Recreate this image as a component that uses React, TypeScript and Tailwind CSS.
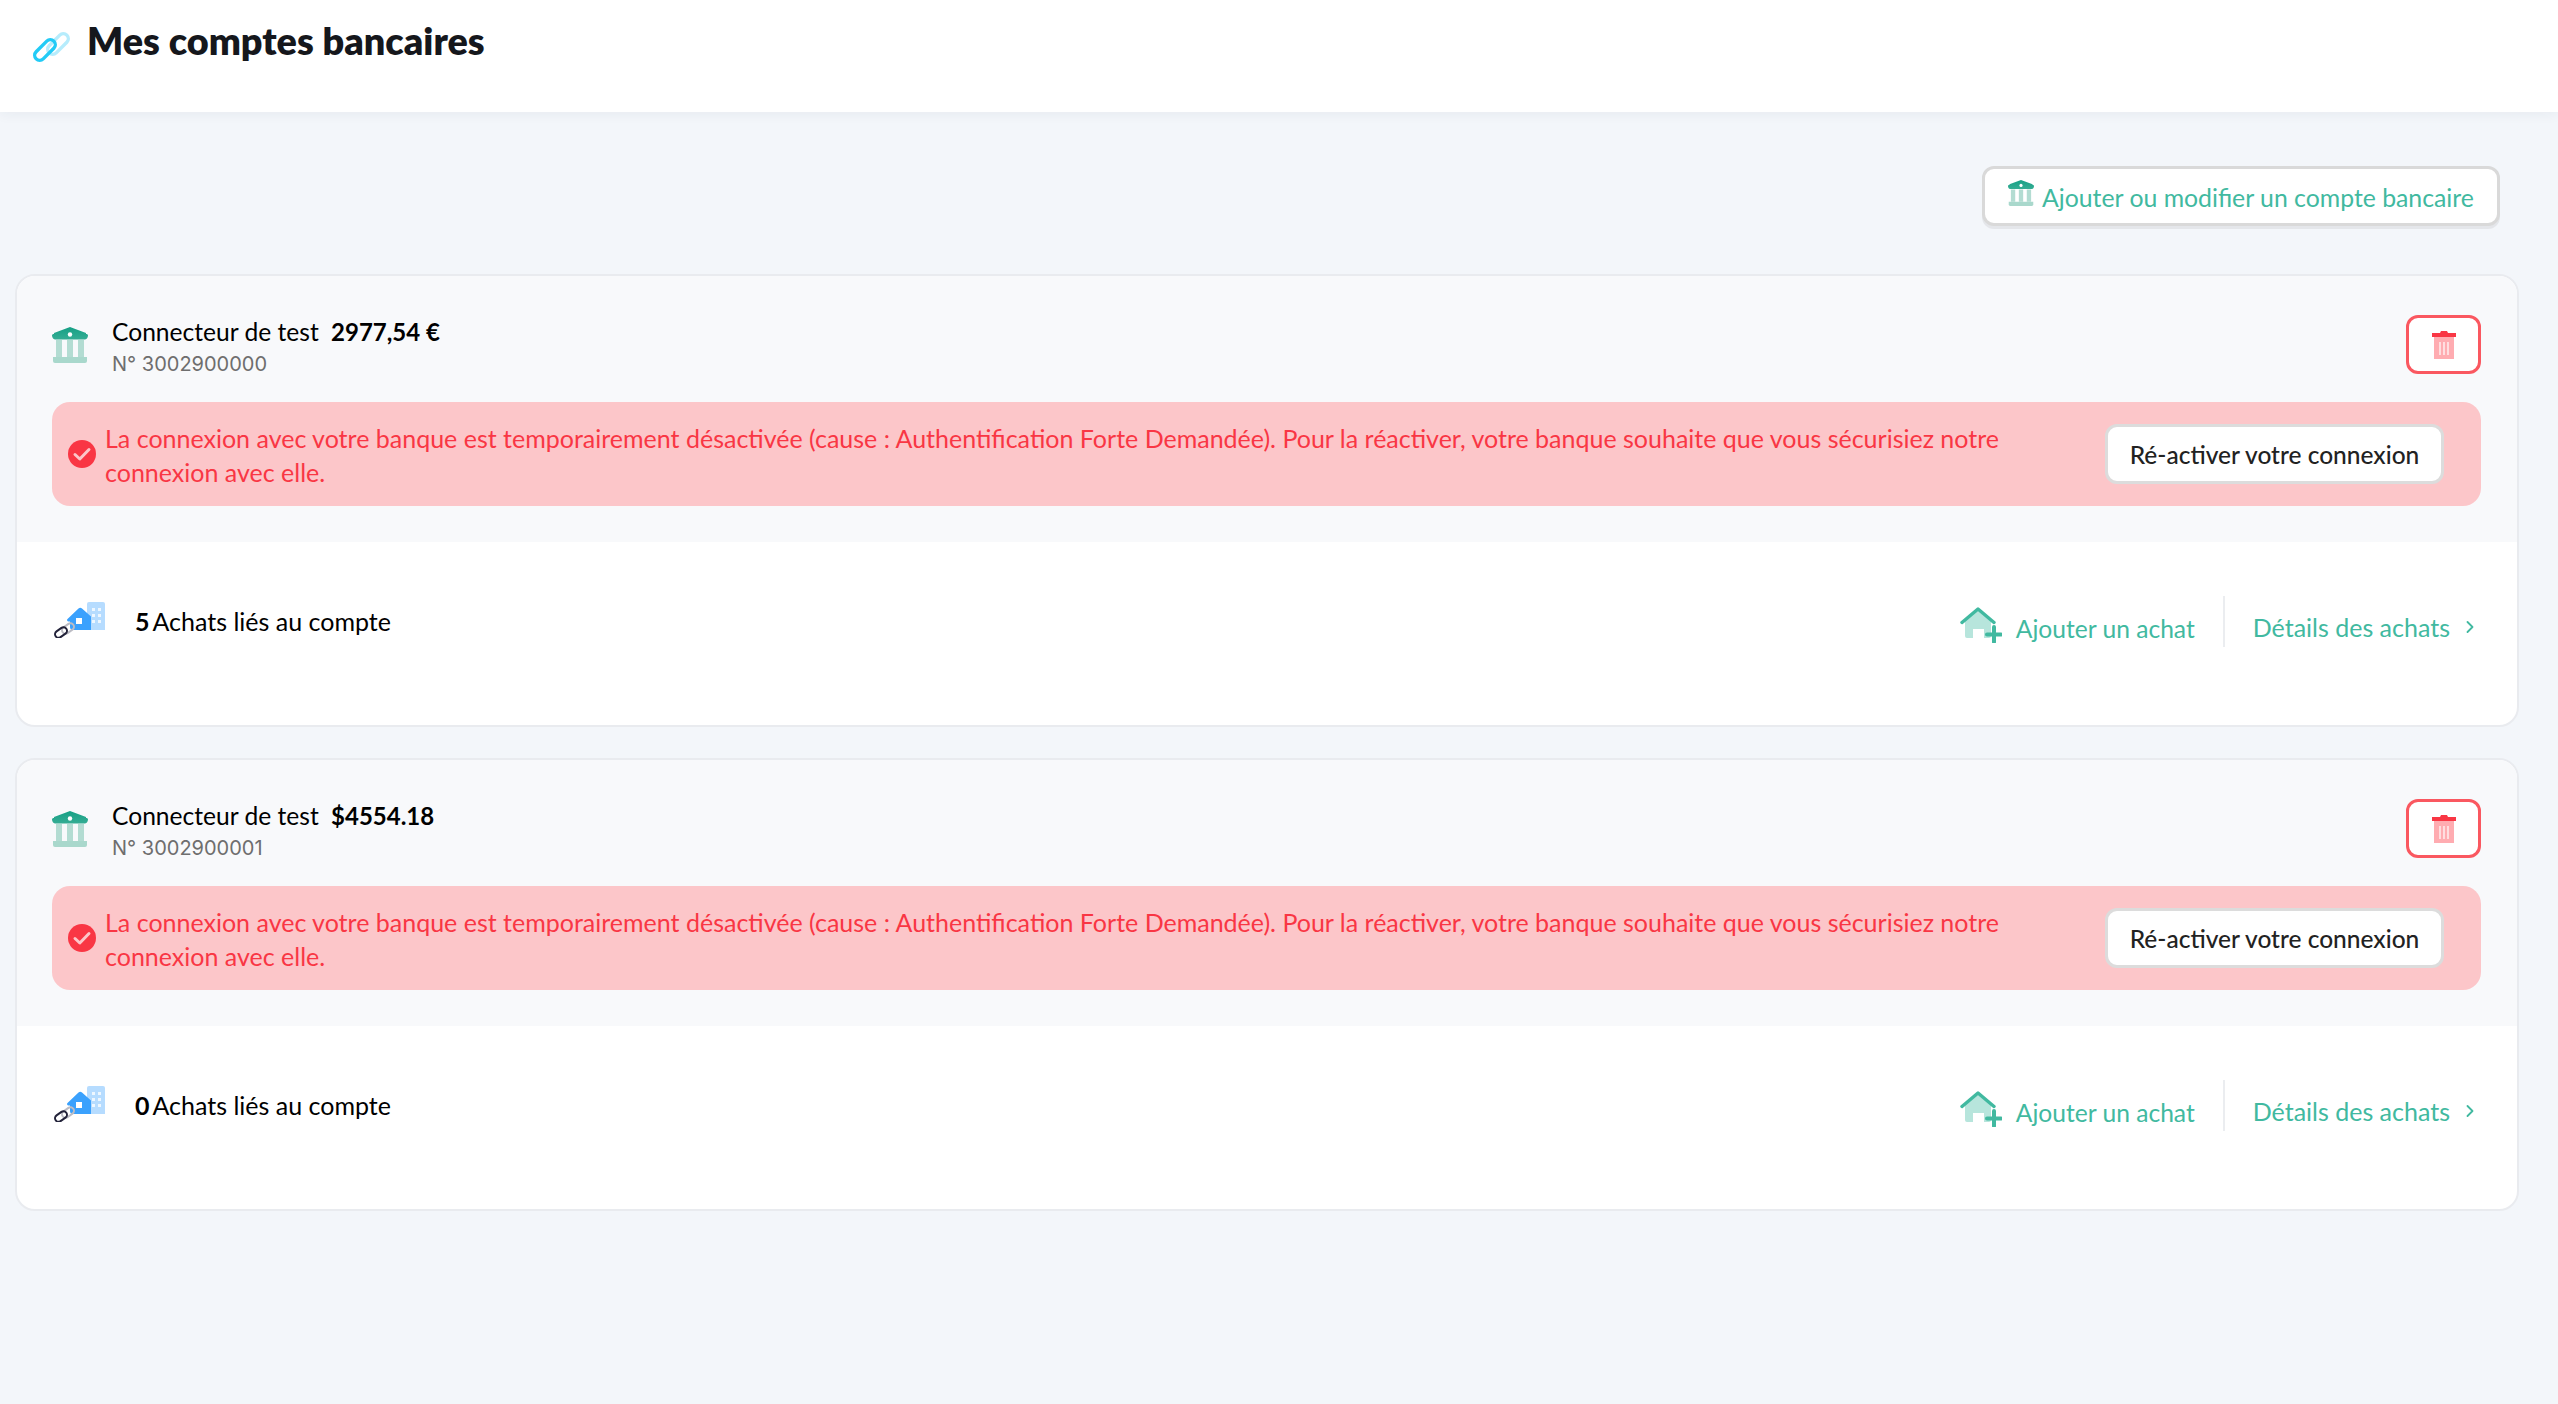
import { ChevronRight } from "lucide-react"

function LinkIcon() {
  return (
    <svg width="39" height="32" viewBox="0 0 39 32" fill="none" className="mt-[10px]">
      <rect x="13.500" y="8" width="25" height="10" rx="5" transform="rotate(-45 26 13)" stroke="#b6ecfc" strokeWidth="3.400" />
      <rect x="0.500" y="14" width="25" height="10" rx="5" transform="rotate(-45 13 19)" stroke="#22cbf6" strokeWidth="3.400" />
    </svg>
  )
}

function BankIcon({ id, size = 36 }: { id: string; size?: number }) {
  return (
    <svg width={size} height={size} viewBox="0 0 36 36" fill="none">
      <defs>
        <linearGradient id={id} x1="0" y1="0" x2="0" y2="1">
          <stop offset="0" stopColor="#16a085" />
          <stop offset="1" stopColor="#35ad94" />
        </linearGradient>
      </defs>
      <path d="M4 13h6v17H4zM15 13h6v17h-6zM26 13h6v17h-6z" fill="#b3dcd2" />
      <path d="M1 30h34v4a2 2 0 0 1-2 2H3a2 2 0 0 1-2-2z" fill="#a9d8cc" />
      <path d="M18 0 34 6v1c1.500 0 2 .7 2 1.500 0 1-1 4-3 4H3c-2 0-3-3-3-4C0 7.700.5 7 2 7V6z" fill={`url(#${id})`} />
      <circle cx="18" cy="7.500" r="2.200" fill="#fff" />
    </svg>
  )
}

function TrashIcon() {
  return (
    <svg width="24" height="28" viewBox="0 0 24 28" fill="none">
      <rect x="2" y="5" width="20" height="23" fill="#ffacb1" />
      <path d="M8 11v13M12 11v13M16 11v13" stroke="#fff" strokeWidth="1.200" />
      <path d="M0 2h8l1-2h6l1 2h8v4H0z" fill="#f93644" />
    </svg>
  )
}

function CheckCircle() {
  return (
    <svg width="28" height="28" viewBox="0 0 28 28" fill="none" className="shrink-0">
      <circle cx="14" cy="14" r="14" fill="#f93644" />
      <path d="M7 14.500 11.800 19 21 9.500" stroke="#fcc6c9" strokeWidth="3" strokeLinecap="round" strokeLinejoin="round" />
    </svg>
  )
}

function PurchasesIcon() {
  return (
    <svg width="52" height="36" viewBox="0 0 52 36" fill="none">
      <path d="M34 2a2 2 0 0 1 2-2h14a2 2 0 0 1 2 2v26H34z" fill="#b6dcff" />
      <path d="M39 6h3v3h-3zM45 6h3v3h-3zM39 12h3v3h-3zM45 12h3v3h-3zM39 18h3v3h-3zM45 18h3v3h-3z" fill="#eef7ff" />
      <path d="M25.500 6.500a2.500 2.500 0 0 1 3.500 0L38 14.500V28H20a3 3 0 0 1-3-3V19.500h-1.500a1.500 1.500 0 0 1-1-2.600z" fill="#3aa1fd" />
      <rect x="23" y="16" width="6" height="6" fill="#fff" />
      <rect x="8.500" y="23" width="13" height="7" rx="3.500" transform="rotate(-35 15 26.500)" stroke="#bcbcc4" strokeWidth="2" />
      <rect x="1.500" y="27" width="13" height="7" rx="3.500" transform="rotate(-35 8 30.500)" stroke="#23233a" strokeWidth="2" />
    </svg>
  )
}

function AddHouseIcon() {
  return (
    <svg width="42" height="37" viewBox="0 0 42 37" fill="none">
      <path d="M5 15 18 4l13 11v15a2 2 0 0 1-2 2h-5V23h-11v9H7a2 2 0 0 1-2-2z" fill="#b7e5dc" />
      <path d="M2 16.500 18 3l16 13.500" stroke="#41b9a0" strokeWidth="3.400" strokeLinecap="round" strokeLinejoin="round" />
      <path d="M34 21v15M27 28.500h14" stroke="#41b9a0" strokeWidth="4" strokeLinecap="round" />
    </svg>
  )
}

function AccountCard({ id, number, balance, count }: { id: string; number: string; balance: string; count: number }) {
  return (
    <section className="overflow-hidden rounded-[20px] border-2 border-[#e9ebef] bg-white">
      <div className="bg-[#f8f9fb] pl-[35px] pr-[36px] pt-[39px] pb-[36px]">
        <div className="flex h-[59px] items-center justify-between">
          <div className="flex items-center">
            <BankIcon id={id} />
            <div className="ml-[24px] mt-[4px]">
              <div className="text-[24.6px] leading-[34px] text-black">
                Connecteur de test <span className="ml-[6px] text-[24px] font-bold">{balance}</span>
              </div>
              <div className="font-['Inter',sans-serif] text-[20px] leading-[30px] text-[#6e6e6e]">N° {number}</div>
            </div>
          </div>
          <button className="flex h-[59px] w-[75px] items-center justify-center rounded-[12px] border-[3px] border-[#fa5860] bg-white">
            <TrashIcon />
          </button>
        </div>
        <div className="mt-[28px] flex h-[104px] items-center justify-between rounded-[18px] bg-[#fcc6c9] pl-[16px] pr-[37px]">
          <div className="flex items-center gap-[9px]">
            <CheckCircle />
            <p className="mt-[2px] w-[1930px] text-[25px] leading-[34px] text-[#f93644]">
              La connexion avec votre banque est temporairement désactivée (cause : Authentification Forte Demandée). Pour la réactiver, votre banque souhaite que vous sécurisiez notre connexion avec elle.
            </p>
          </div>
          <button className="flex h-[60px] w-[339px] shrink-0 items-center justify-center rounded-[12px] border-[3px] border-[#dcdcdc] bg-white pt-[2px] text-[24.5px] font-medium text-[#222]">
            Ré-activer votre connexion
          </button>
        </div>
      </div>
      <div className="flex h-[183px] items-start justify-between pl-[36px] pr-[37px] pt-[54px]">
        <div className="mt-[6px] flex h-[36px] items-center">
          <PurchasesIcon />
          <span className="ml-[30px] mt-[3px] text-[25px] text-black">
            <span className="mr-[3px] font-bold">{count}</span>Achats liés au compte
          </span>
        </div>
        <div className="flex h-[51px] items-start text-[25px] text-[#41b9a0]">
          <div className="mt-[10px] flex items-start">
            <AddHouseIcon />
            <span className="ml-[14px] mt-[6px] text-[24.6px] leading-[34px]">Ajouter un achat</span>
          </div>
          <div className="mx-[28px] h-[51px] w-[2px] bg-[#ebedf0]" />
          <div className="mt-[14px] flex items-center leading-[34px]">
            Détails des achats
            <ChevronRight size={20} strokeWidth={2.2} className="ml-[10px]" />
          </div>
        </div>
      </div>
    </section>
  )
}

export default function App() {
  return (
    <div className="min-h-[1404px] bg-[#f3f6fa] font-['Lato',sans-serif]">
      <header className="flex h-[112px] items-start bg-white pl-[32px] pt-[21px] shadow-[0_2px_12px_rgba(30,50,90,0.06)]">
        <LinkIcon />
        <h1 className="ml-[16px] text-[37.8px] font-extrabold leading-[40px] text-[#15171c]">Mes comptes bancaires</h1>
      </header>
      <main className="pl-[15px] pr-[39px]">
        <div className="flex justify-end pr-[19px] pt-[54px]">
          <button className="flex h-[60px] w-[518px] items-center justify-center gap-[8px] rounded-[12px] border-[3px] border-[#d9d9d9] bg-white pt-[3px] text-[24.8px] text-[#41b9a0] shadow-[0_3px_0_#e4e6ea]">
            <span className="-mt-[9px]">
              <BankIcon id="bank-top" size={26} />
            </span>
            Ajouter ou modifier un compte bancaire
          </button>
        </div>
        <div className="mt-[48px] flex flex-col gap-[31px]">
          <AccountCard id="bank-a" number="3002900000" balance="2977,54 €" count={5} />
          <AccountCard id="bank-b" number="3002900001" balance="$4554.18" count={0} />
        </div>
      </main>
    </div>
  )
}
